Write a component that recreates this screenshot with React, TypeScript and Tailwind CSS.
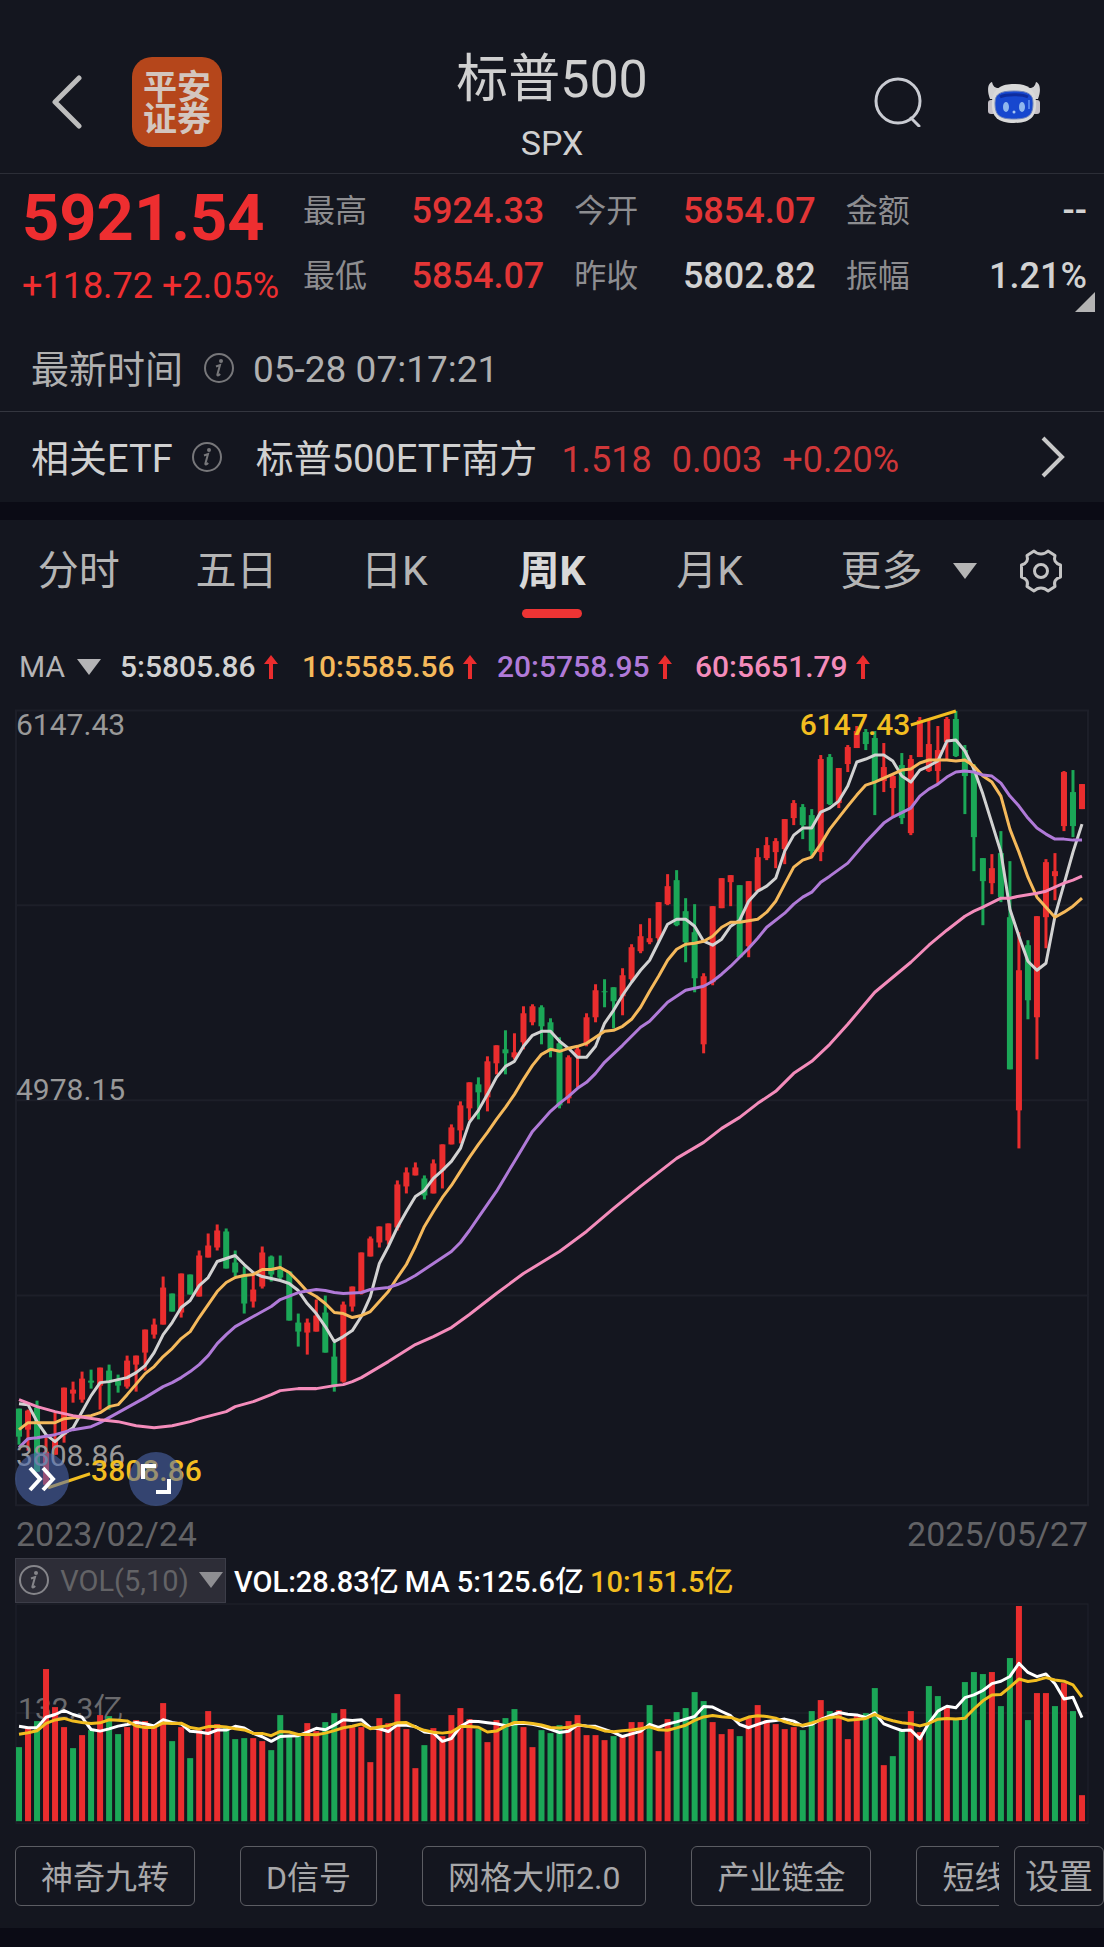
import { ReactNode } from "react";
import clsx from "clsx";

const RED = "#ea2d2e";
const GREEN = "#1ba757";
const GOLD = "#f2bd20";

// [high, body top, body bottom, low, up] measured down from the top of the chart
const candles: number[][] = [
  [698, 698, 726, 734, 0], [699, 700, 719, 740, 1], [690, 697, 761, 761, 0], [726, 741, 774, 774, 1],
  [702, 729, 744, 744, 1], [677, 677, 724, 732, 1], [671, 679, 683, 692, 1], [661, 668, 689, 692, 1],
  [659, 670, 672, 678, 0], [657, 657, 675, 699, 1], [654, 660, 672, 699, 0], [664, 670, 675, 682, 0],
  [645, 650, 676, 678, 1], [645, 645, 654, 681, 1], [619, 619, 642, 660, 1], [608, 614, 624, 628, 1],
  [566, 577, 614, 614, 1], [583, 583, 601, 601, 0], [563, 563, 602, 607, 1], [564, 564, 584, 584, 0],
  [540, 545, 586, 586, 1], [523, 535, 547, 547, 1], [514, 520, 537, 540, 1], [518, 521, 558, 558, 0],
  [540, 552, 562, 566, 0], [556, 564, 593, 603, 0], [564, 579, 591, 597, 1], [536, 542, 576, 578, 1],
  [545, 546, 564, 571, 0], [545, 559, 567, 569, 0], [561, 561, 610, 610, 0], [603, 612, 621, 636, 0],
  [608, 612, 622, 644, 1], [589, 605, 621, 621, 1], [585, 602, 642, 642, 0], [632, 646, 676, 681, 0],
  [591, 594, 671, 672, 1], [576, 576, 596, 601, 1], [542, 542, 583, 584, 1], [526, 528, 546, 546, 1],
  [516, 516, 532, 537, 1], [513, 513, 530, 534, 1], [470, 474, 517, 520, 1], [457, 462, 476, 483, 1],
  [452, 457, 465, 465, 1], [465, 468, 485, 489, 0], [449, 453, 483, 483, 1], [434, 434, 460, 478, 1],
  [414, 417, 434, 434, 1], [391, 395, 420, 433, 1], [372, 372, 398, 410, 1], [367, 374, 382, 409, 0],
  [346, 351, 387, 401, 1], [335, 335, 353, 364, 1], [320, 339, 343, 364, 0], [323, 342, 347, 349, 1],
  [296, 303, 332, 339, 1], [294, 296, 312, 315, 1], [295, 297, 316, 334, 0], [308, 312, 340, 347, 0],
  [327, 333, 395, 398, 0], [345, 347, 388, 393, 1], [336, 339, 346, 377, 1], [303, 307, 334, 336, 1],
  [274, 280, 307, 312, 1], [269, 281, 282, 297, 0], [277, 277, 291, 318, 0], [258, 265, 286, 305, 1],
  [234, 237, 269, 271, 1], [214, 226, 241, 243, 1], [208, 228, 232, 234, 1], [192, 192, 228, 231, 1],
  [164, 176, 194, 195, 1], [160, 170, 215, 216, 0], [188, 201, 232, 252, 0], [194, 222, 268, 282, 0],
  [263, 266, 334, 343, 1], [196, 196, 272, 275, 1], [168, 168, 198, 198, 1], [165, 165, 172, 196, 1],
  [175, 175, 247, 247, 0], [171, 171, 236, 247, 1], [138, 147, 181, 181, 1], [127, 135, 148, 150, 1],
  [128, 131, 142, 158, 1], [109, 109, 139, 154, 1], [90, 93, 108, 115, 1], [94, 97, 115, 129, 0],
  [99, 105, 141, 146, 0], [45, 49, 142, 151, 1], [44, 47, 94, 95, 0], [58, 58, 93, 98, 1],
  [35, 37, 54, 62, 1], [16, 21, 38, 38, 1], [19, 22, 34, 40, 0], [21, 28, 72, 105, 0],
  [33, 57, 71, 82, 1], [64, 66, 78, 106, 1], [43, 55, 108, 114, 0], [45, 49, 123, 125, 1],
  [7, 10, 47, 47, 1], [10, 34, 61, 62, 1], [16, 40, 61, 73, 1], [7, 9, 32, 49, 1],
  [1, 9, 46, 47, 0], [35, 40, 66, 104, 0], [54, 62, 127, 161, 0], [148, 148, 171, 215, 0],
  [144, 158, 173, 184, 1], [121, 143, 187, 192, 0], [151, 207, 359, 359, 0], [222, 260, 400, 438, 1],
  [230, 235, 290, 309, 0], [206, 206, 307, 349, 1], [149, 152, 207, 238, 1], [143, 161, 166, 190, 1],
  [61, 62, 116, 121, 1], [60, 82, 116, 127, 0], [74, 74, 99, 99, 1],
];

const ma5 = [
  693, 694, 711, 724, 731, 723, 717, 701, 685, 672, 671, 669, 667, 662, 655, 642, 624, 612, 597, 590,
  575, 567, 551, 548, 545, 554, 562, 566, 568, 570, 573, 580, 593, 603, 616, 631, 626, 620, 606, 586,
  553, 536, 517, 501, 486, 480, 468, 460, 451, 438, 412, 400, 384, 367, 356, 351, 336, 325, 321, 321,
  331, 338, 347, 347, 336, 313, 300, 285, 272, 260, 250, 232, 214, 209, 209, 216, 231, 235, 229, 216,
  210, 191, 181, 176, 168, 141, 125, 118, 118, 102, 98, 91, 76, 52, 49, 45, 45, 51, 66, 72,
  60, 56, 51, 31, 30, 41, 59, 84, 113, 142, 199, 226, 251, 260, 253, 206, 174, 142, 114,
].map((y, i) => [i, y]);

// [week, y]
const ma10 = [
  [0, 719], [1, 712], [4, 712], [5, 708], [7, 706], [8, 705], [9, 702], [10, 696], [11, 694], [12, 684],
  [14, 663], [15, 656], [16, 646], [17, 638], [18, 628], [19, 621], [20, 607], [21, 594], [22, 581],
  [23, 572], [24, 567], [25, 565], [26, 564], [27, 559], [28, 559], [29, 557], [30, 562], [31, 571],
  [32, 581], [33, 586], [34, 593], [35, 602], [36, 603], [37, 607], [38, 605], [39, 601], [40, 591],
  [41, 581], [42, 567], [43, 554], [44, 536], [45, 516], [46, 501], [47, 487], [48, 475], [49, 461],
  [50, 447], [51, 434], [52, 422], [53, 409], [54, 397], [55, 384], [56, 369], [57, 355], [58, 344],
  [59, 339], [60, 341], [61, 338], [62, 336], [63, 333], [64, 327], [65, 321], [66, 320], [67, 316],
  [68, 309], [69, 297], [70, 281], [71, 266], [72, 250], [73, 239], [74, 234], [75, 233], [76, 231],
  [77, 226], [78, 217], [79, 212], [80, 212], [82, 209], [83, 202], [84, 191], [85, 174], [86, 157],
  [87, 150], [88, 147], [89, 134], [90, 119], [92, 96], [93, 85], [94, 75], [95, 72], [96, 68],
  [97, 64], [98, 60], [99, 59], [100, 53], [101, 50], [103, 50], [104, 51], [105, 50], [106, 56],
  [107, 66], [108, 72], [109, 86], [110, 119], [111, 142], [112, 167], [113, 187], [114, 197],
  [115, 207], [116, 202], [117, 196], [118, 188],
];

const ma20 = [
  [0, 737], [1, 728], [2, 727], [4, 724], [6, 719], [8, 716], [9, 712], [10, 707], [12, 697], [14, 687],
  [16, 676], [17, 672], [18, 667], [19, 661], [20, 654], [21, 645], [22, 633], [23, 624], [24, 616],
  [26, 606], [28, 596], [29, 589], [31, 582], [33, 579], [34, 580], [35, 582], [36, 583], [38, 582],
  [39, 579], [41, 577], [42, 574], [43, 570], [44, 565], [45, 559], [46, 553], [47, 547], [48, 541],
  [49, 532], [50, 520], [51, 507], [52, 494], [53, 481], [54, 466], [55, 451], [56, 436], [57, 421],
  [58, 411], [59, 401], [60, 393], [61, 386], [62, 378], [63, 372], [64, 363], [65, 352], [67, 335],
  [69, 317], [70, 311], [72, 292], [74, 280], [75, 278], [76, 276], [77, 271], [78, 264], [79, 256],
  [80, 247], [81, 238], [82, 228], [83, 217], [85, 203], [86, 194], [87, 187], [88, 182], [89, 172],
  [90, 166], [92, 153], [94, 132], [96, 113], [97, 107], [99, 98], [100, 86], [101, 79], [102, 74],
  [103, 67], [104, 62], [105, 61], [106, 62], [107, 65], [108, 66], [109, 73], [110, 86], [111, 96],
  [112, 108], [113, 118], [114, 124], [115, 129], [116, 129], [117, 130], [118, 130],
];

const ma60 = [
  [0, 689], [2, 696], [4, 701], [6, 705], [9, 709], [11, 711], [13, 715], [15, 717], [17, 715],
  [19, 711], [20, 708], [23, 701], [24, 696], [26, 691], [28, 684], [29, 680], [31, 678], [33, 678],
  [35, 675], [36, 674], [37, 671], [38, 667], [41, 651], [44, 634], [46, 626], [48, 617], [50, 604],
  [53, 583], [56, 563], [60, 541], [63, 521], [66, 498], [69, 476], [73, 448], [76, 432], [78, 418],
  [80, 407], [82, 393], [84, 381], [86, 363], [88, 351], [90, 334], [92, 314], [95, 282], [97, 267],
  [99, 252], [101, 235], [103, 220], [105, 206], [106, 201], [107, 197], [109, 188], [110, 188],
  [111, 186], [113, 183], [114, 181], [115, 177], [116, 173], [117, 170], [118, 166],
];

// bar heights, negative for a falling week
const volumes = [
  -74, 93, -100, 152, 114, 94, -73, 86, -91, 106, -105, -87, 94, 101, 100, 94, 118, -80, 94, -63,
  91, 110, 97, -94, -82, -83, 83, 80, -71, -106, -85, -85, 98, 90, -99, -108, 112, 94, 94, 59,
  103, 98, 127, 92, 53, -76, 93, 85, 106, 113, 102, -92, 79, 101, -103, -112, 94, 74, -91, -88,
  -96, 100, 106, 86, 86, 81, -85, 85, 99, 99, -116, 70, 102, -109, -113, -129, -120, 99, 87, 92,
  -85, 104, 116, 101, 97, 92, 94, -91, -110, 121, -110, 111, 82, 107, -108, -133, 56, -65, -91, 110,
  89, -135, -125, 115, -103, -139, -149, -147, 149, -115, -163, 215, -101, 128, 128, -115, 138, -110, 26,
];
// weeks before the first visible bar, needed by the averages
const volumeHistory = [79, 79, 79, 79, 79, 100, 100, 100, 100];

const xAt = (i: number) => 4 + i * 9;
const toPoints = (line: number[][]) => line.map(([i, y]) => `${xAt(i)},${y}`).join(" ");

function volumeAverage(days: number) {
  const all = [...volumeHistory, ...volumes.map(Math.abs)];
  return volumes.map((_, i) => {
    const end = i + volumeHistory.length + 1;
    const sum = all.slice(end - days, end).reduce((a, b) => a + b, 0);
    return [i, 218 - sum / days];
  });
}

const quotes = [
  { label: "最高", value: "5924.33", red: true },
  { label: "今开", value: "5854.07", red: true },
  { label: "金额", value: "--" },
  { label: "最低", value: "5854.07", red: true },
  { label: "昨收", value: "5802.82" },
  { label: "振幅", value: "1.21%" },
];

const tabs = ["分时", "五日", "日K", "周K", "月K"];
const tools = ["神奇九转", "D信号", "网格大师2.0", "产业链金", "短线宝"];

const averages = [
  { text: "5:5805.86", color: "text-[#d2d2d2]", width: "w-[182px]" },
  { text: "10:5585.56", color: "text-[#f5b95b]", width: "w-[195px]" },
  { text: "20:5758.95", color: "text-[#b07ad8]", width: "w-[198px]" },
  { text: "60:5651.79", color: "text-[#f48cbb]", width: "w-[198px]" },
];

function InfoIcon({ className }: { className?: string }) {
  return (
    <svg viewBox="0 0 32 32" className={clsx("w-8 h-8 shrink-0", className)} fill="none">
      <circle cx="16" cy="16" r="14" stroke="currentColor" strokeWidth="2" />
      <circle cx="18" cy="9" r="2" fill="currentColor" />
      <path d="M13 14.5l4-1.5-2.6 9.5c-.3 1.4.8 1.4 2.8-.4" stroke="currentColor" strokeWidth="2" />
    </svg>
  );
}

function Triangle({ className }: { className?: string }) {
  return (
    <svg viewBox="0 0 24 16" className={clsx("w-6 h-4 shrink-0", className)} fill="currentColor">
      <path d="M0 0h24L12 16z" />
    </svg>
  );
}

function UpArrow() {
  return (
    <svg viewBox="0 0 14 24" className="w-[14px] h-6" fill={RED}>
      <path d="M7 0l7 9H9v15H5V9H0z" />
    </svg>
  );
}

function Robot() {
  return (
    <svg viewBox="0 0 54 44" className="w-[54px] h-11">
      <path d="M3 19C-1 8 2 3 5 2c1 5 4 7 9 6 8-3 18-3 26 0 5 1 8-1 9-6 3 1 6 6 2 17z" fill="#d2d2d4" />
      <rect x="1" y="20" width="8" height="14" rx="3" fill="#c4bfc6" />
      <rect x="45" y="20" width="8" height="14" rx="3" fill="#c4bfc6" />
      <path d="M5 21C6 8 15 4 27 4s21 4 22 17c1 14-4 22-22 22S4 35 5 21z" fill="#d9d9d9" />
      <path d="M8 23c0-9 5-12 19-12s19 3 19 12c0 12-4 16-19 16S8 35 8 23z" fill="#1747cf" stroke="#6f84bd" strokeWidth="1" />
      <path d="M13 17c6-3 22-3 28 0" stroke="#0e2c9e" strokeWidth="3" fill="none" />
      <ellipse cx="19" cy="27" rx="3" ry="5" fill="#8fb7ee" />
      <ellipse cx="35" cy="27" rx="3" ry="5" fill="#8fb7ee" />
      <circle cx="27" cy="32" r="1.500" fill="#a9c6f2" />
      <path d="M42 20v9" stroke="#4f80ea" strokeWidth="2" />
    </svg>
  );
}

function Gear() {
  return (
    <svg viewBox="0 0 44 44" className="w-11 h-11" fill="none" stroke="#c4c4c4" strokeWidth="3" strokeLinejoin="round">
      <path d="M15 2L8 6.500c1.500 5-.5 8-5.500 9.500v12c5 1.500 7 4.500 5.500 9.500L15 42c4-4 10-4 14 0l7-4.500c-1.500-5 .5-8 5.500-9.500V16c-5-1.500-7-4.500-5.500-9.500L29 2c-4 4-10 4-14 0z" />
      <circle cx="22" cy="22" r="6.500" />
    </svg>
  );
}

function RoundButton({ label, className, children }: { label: string; className: string; children: ReactNode }) {
  return (
    <button
      aria-label={label}
      className={clsx("absolute bottom-0 w-[54px] h-[54px] rounded-full bg-[#4e6cb2]/55 flex items-center justify-center", className)}
    >
      <svg viewBox="0 0 30 30" className="w-[30px] h-[30px]" fill="none" stroke="#fff" strokeWidth="4">
        {children}
      </svg>
    </button>
  );
}

function Header() {
  return (
    <header className="grid grid-cols-[1fr_auto_1fr] pt-[47px] border-b border-[#2c2e37]">
      <div className="flex items-center pl-[50px] pb-4 gap-[50px]">
        <button aria-label="返回">
          <svg viewBox="0 0 32 54" className="w-8 h-[54px]" fill="none" stroke="#bdbdbd" strokeWidth="5" strokeLinecap="round" strokeLinejoin="round">
            <path d="M29 3L5 27l24 24" />
          </svg>
        </button>
        <div className="w-[90px] h-[90px] rounded-[20px] bg-[#b5461b] text-[#d3c6bf] text-[34px] leading-[32px] font-bold text-center pt-[14px]">
          平安
          <br />
          证券
        </div>
      </div>
      <div className="text-center text-[#d0d0d0]">
        <h1 className="text-[52px] leading-[66px]">标普500</h1>
        <p className="text-[34px] leading-[60px]">SPX</p>
      </div>
      <div className="flex items-center justify-end pr-[63px] pb-4 gap-[64px]">
        <button aria-label="搜索">
          <svg viewBox="0 0 50 50" className="w-[50px] h-[50px]" fill="none" stroke="#c9cbd2" strokeWidth="3" strokeLinecap="round">
            <circle cx="25" cy="24" r="22" />
            <path d="M38 41l8 8" />
          </svg>
        </button>
        <button aria-label="智能助手">
          <Robot />
        </button>
      </div>
    </header>
  );
}

function Quote() {
  return (
    <section className="relative flex pr-[17px] pt-1 h-[152px]">
      <div className="w-[303px] pl-[22px] whitespace-nowrap text-[#ee2e30]">
        <p className="text-[65px] leading-[80px] font-bold">5921.54</p>
        <p className="text-[36px] leading-[56px]">+118.72 +2.05%</p>
      </div>
      <dl className="flex-1 grid grid-cols-3 gap-x-[30px] content-start">
        {quotes.map((q) => (
          <div key={q.label} className="flex items-center justify-between h-[65px]">
            <dt className="text-[32px] text-[#8d8d90]">{q.label}</dt>
            <dd className={clsx("text-[36px] font-medium", q.red ? "text-[#e23536]" : "text-[#d2d2d2]")}>{q.value}</dd>
          </div>
        ))}
      </dl>
      <svg viewBox="0 0 20 20" className="absolute right-[9px] bottom-[14px] w-5 h-5" fill="#b4b4b4">
        <path d="M20 0v20H0z" />
      </svg>
    </section>
  );
}

function PriceChart() {
  return (
    <div className="relative mx-[15px]">
      <svg viewBox="0 0 1073 795" className="block w-full overflow-visible" fill="none" fontSize="30">
        <path d="M1 0.500h1071v794H1zM1 195h1071M1 390h1071M1 585h1071" stroke="#1d1f29" strokeWidth="2" />
        {candles.map(([high, top, bottom, low, up], i) => (
          <g key={i} fill={up ? RED : GREEN}>
            <rect x={xAt(i) - 1.5} y={high} width="3" height={low - high} />
            <rect x={xAt(i) - 3} y={top} width="6" height={bottom - top} />
          </g>
        ))}
        <g strokeWidth="3" strokeLinejoin="round">
          <polyline points={toPoints(ma5)} stroke="#d2d2d2" />
          <polyline points={toPoints(ma10)} stroke="#f5b95b" />
          <polyline points={toPoints(ma20)} stroke="#b07ad8" />
          <polyline points={toPoints(ma60)} stroke="#f48cbb" />
          <path d="M895 15L940 1M33 777l42-14" stroke={GOLD} />
        </g>
        <g fill="#999">
          <text x="1" y="25">6147.43</text>
          <text x="1" y="390">4978.15</text>
          <text x="1" y="755">3808.86</text>
        </g>
        <g fill={GOLD} fontWeight="500">
          <text x="784" y="25">6147.43</text>
          <text x="76" y="770">3808.86</text>
        </g>
      </svg>
      <RoundButton label="展开" className="left-0">
        <path d="M3 4l10 11L3 26M16 4l10 11-10 11" />
      </RoundButton>
      <RoundButton label="全屏" className="left-[114px]">
        <path d="M2 15V2h13M28 15v13H15" />
      </RoundButton>
    </div>
  );
}

function VolumeChart() {
  return (
    <div className="mx-[15px]">
      <svg viewBox="0 0 1073 221" className="block w-full" fill="none" fontSize="30">
        <path d="M1 1h1071v219H1zM1 110h1071" stroke="#20222d" strokeWidth="1" />
        <text x="3" y="116" fill="#6a6a6d">132.3亿</text>
        {volumes.map((v, i) => (
          <rect key={i} x={xAt(i) - 3} y={218 - Math.abs(v)} width="6" height={Math.abs(v)} fill={v > 0 ? RED : GREEN} />
        ))}
        <g strokeWidth="3" strokeLinejoin="round">
          <polyline points={toPoints(volumeAverage(5))} stroke="#fff" />
          <polyline points={toPoints(volumeAverage(10))} stroke={GOLD} />
        </g>
      </svg>
    </div>
  );
}

export default function App() {
  return (
    <div className="min-h-screen bg-[#0b0b15] font-['Roboto','Noto_Sans_CJK_SC',sans-serif] overflow-hidden">
      <main className="bg-[#14161f] pb-[22px]">
        <Header />
        <Quote />

        <div className="flex items-center h-[86px] pl-[31px] pb-px border-b border-[#34363f] text-[#b0b0b0]">
          <span className="pt-1 text-[38px]">最新时间</span>
          <InfoIcon className="ml-5 text-[#77777a]" />
          <span className="pt-1 ml-[18px] text-[37px]">05-28 07:17:21</span>
        </div>

        <a href="#etf" className="flex items-center h-[90px] pl-[31px] pr-[38px] pb-px text-[38px] text-[#d0d0d0] whitespace-nowrap">
          <span className="pt-1.5">相关ETF</span>
          <InfoIcon className="ml-[18px] text-[#77777a]" />
          <span className="pt-1.5 ml-[33px]">标普500ETF南方</span>
          <span className="pt-1.5 ml-6 flex gap-5 text-[36px] text-[#cf3739]">
            <span>1.518</span>
            <span>0.003</span>
            <span>+0.20%</span>
          </span>
          <svg viewBox="0 0 26 42" className="ml-auto w-[26px] h-[42px]" fill="none" stroke="#c8c8c8" strokeWidth="4">
            <path d="M3 2l19 19L3 40" />
          </svg>
        </a>

        <div className="h-[18px] bg-[#0b0b15]" />

        <nav className="grid grid-cols-7 h-[101px] text-[41px] text-[#b5b5b5]">
          {tabs.map((tab) => (
            <button
              key={tab}
              className={clsx("relative flex justify-center items-center pt-0.5", tab === "周K" && "font-bold text-[#d8d8d8]")}
            >
              {tab}
              {tab === "周K" && <span className="absolute bottom-[3px] w-[60px] h-[9px] rounded-full bg-[#ee3434]" />}
            </button>
          ))}
          <div className="col-span-2 flex items-center justify-between pl-[52px] pr-[41px]">
            <button className="flex items-center gap-[30px]">
              <span className="pt-0.5">更多</span> <Triangle />
            </button>
            <button aria-label="图表设置">
              <Gear />
            </button>
          </div>
        </nav>

        <div className="flex items-center h-[89px] pl-[19px] pt-0.5 text-[30px] whitespace-nowrap">
          <button className="flex items-center w-[101px] gap-3 text-[#b4b4b6]">
            MA <Triangle />
          </button>
          {averages.map((a) => (
            <span key={a.text} className={clsx("flex items-center gap-2 font-medium", a.color, a.width)}>
              {a.text}
              <UpArrow />
            </span>
          ))}
        </div>

        <PriceChart />

        <div className="flex justify-between px-4 h-[52px] items-center pt-1.5 text-[34px] text-[#636366]">
          <span>2023/02/24</span>
          <span>2025/05/27</span>
        </div>

        <div className="flex items-center mx-[15px] h-[45px] text-[29px] font-medium text-white whitespace-nowrap">
          <button className="flex items-center justify-between w-[211px] h-[45px] px-0.5 mr-2 bg-[#2d2d37] border border-[#3c3d48] font-normal text-[#636366]">
            <InfoIcon className="text-[#85858a]" />
            <span className="pt-1">VOL(5,10)</span>
            <Triangle className="text-[#8e8e92]" />
          </button>
          <span className="pt-1.5">VOL:28.83亿</span>
          <span className="pt-1.5 ml-1.5">MA 5:125.6亿</span>
          <span className="pt-1.5 ml-1.5 text-[#f2bd20]">10:151.5亿</span>
        </div>

        <VolumeChart />

        <div className="flex mt-[22px] h-[60px] text-[32px] text-[#a8a8aa] whitespace-nowrap">
          <div className="flex-1 min-w-0 flex gap-[45px] mx-[15px] overflow-hidden">
            {tools.map((tool) => (
              <button key={tool} className="shrink-0 px-[25px] pt-1 rounded-md border border-[#5c5d63]">
                {tool}
              </button>
            ))}
          </div>
          <button className="w-[90px] pt-1 rounded-md border border-[#5c5d63] text-[34px]">设置</button>
        </div>
      </main>
    </div>
  );
}
